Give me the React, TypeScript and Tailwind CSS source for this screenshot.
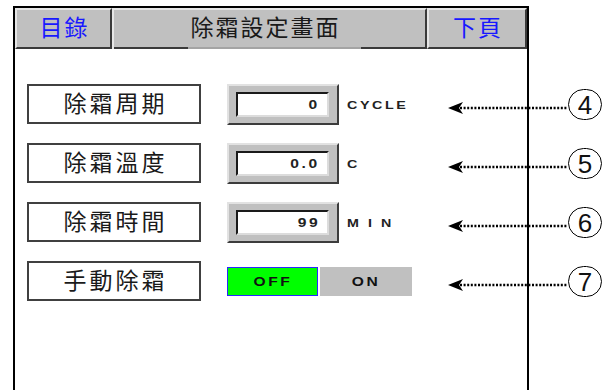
const cjk = "font-['Liberation_Sans','Noto_Sans_CJK_TC',sans-serif]"

type Row = { label: string; value?: string; unit?: string; unitCls?: string; mark: string; toggle?: boolean }

const rows: Row[] = [
  { label: "除霜周期", value: "0", unit: "CYCLE", unitCls: "tracking-[2px]", mark: "4" },
  { label: "除霜溫度", value: "0.0", unit: "C", unitCls: "tracking-[2px]", mark: "5" },
  { label: "除霜時間", value: "99", unit: "MIN", unitCls: "tracking-[7px]", mark: "6" },
  { label: "手動除霜", toggle: true, mark: "7" },
]

function Pointer({ mark }: { mark: string }) {
  return (
    <div className="flex items-start shrink-0">
      <svg width="120" height="14" viewBox="0 0 120 14" className="mt-[17px] shrink-0">
        <polygon points="0,7 15,1 11,7 15,13" fill="#000" />
        <line x1="12" y1="7" x2="119" y2="7" stroke="#000" strokeWidth="2.5" strokeDasharray="2 1.6" />
      </svg>
      <div className="shrink-0 mt-[5px] w-[34px] h-[31px] rounded-full border-[1.5px] border-black flex items-center justify-center text-[26px] leading-none font-['Liberation_Sans',sans-serif] text-[#111]">
        {mark}
      </div>
    </div>
  )
}

function NumField({ value }: { value: string }) {
  return (
    <div className="shrink-0 w-[112px] h-[41px] bg-[#c0c0c0] border-2 border-t-[#e2e2e2] border-l-[#e2e2e2] border-r-[#3c3c3c] border-b-[#3c3c3c] pt-[6px] pl-[7px]">
      <div className="w-[93px] h-[25px] bg-white border-2 border-t-[#1a1a1a] border-l-[#1a1a1a] border-r-[#dcdcdc] border-b-[#dcdcdc] flex items-center justify-end pr-[9px]">
        <span className="inline-block origin-right scale-x-[1.3] text-[12px] font-bold tracking-[2px] mr-[-2px] leading-none font-['Liberation_Sans',sans-serif] text-[#222]">{value}</span>
      </div>
    </div>
  )
}

function Toggle() {
  return (
    <div className="mt-[6px] flex gap-[2px] shrink-0">
      <div className="w-[91px] h-[29px] bg-[#00ff00] border-[1.5px] border-[#2828ff] flex items-center justify-center">
        <span className="inline-block scale-x-[1.3] text-[12px] font-bold tracking-[2px] font-['Liberation_Sans',sans-serif] text-[#111]">OFF</span>
      </div>
      <div className="w-[92px] h-[29px] bg-[#c0c0c0] flex items-center justify-center">
        <span className="inline-block scale-x-[1.3] text-[12px] font-bold tracking-[2px] font-['Liberation_Sans',sans-serif] text-[#111]">ON</span>
      </div>
    </div>
  )
}

export default function App() {
  return (
    <div className={`w-[614px] h-[390px] overflow-hidden bg-white pt-[6px] pl-[13px] ${cjk}`}>
      <div className="w-[516px] h-[400px] border-x-2 border-t-2 border-black">
        {/* header bar */}
        <div className="flex h-[41px]">
          <div className="w-[97px] bg-[#c0c0c0] border-2 border-t-[#e6e6e6] border-l-[#e6e6e6] border-r-[#3a3a3a] border-b-[#3a3a3a] flex items-center justify-center text-[23px] tracking-[2px] pl-[2px] text-[#1818ff]">
            目錄
          </div>
          <div className="w-[315px] bg-[#c0c0c0] border-t-2 border-l-2 border-r-2 border-t-[#e6e6e6] border-l-[#e6e6e6] border-r-[#3a3a3a] flex flex-col">
            <div className="flex-1 flex items-center justify-center text-[23px] tracking-[2px] pl-[2px] text-[#1a1a1a] -ml-[10px]">
              除霜設定畫面
            </div>
            <div className="flex h-[2px]">
              <div className="w-[74px] bg-[#3a3a3a]" />
              <div className="w-[173px] bg-[#a4a4a4]" />
              <div className="flex-1 bg-[#3a3a3a]" />
            </div>
          </div>
          <div className="flex-1 bg-[#c0c0c0] border-2 border-t-[#e6e6e6] border-l-[#e6e6e6] border-r-[#3a3a3a] border-b-[#3a3a3a] flex items-center justify-center text-[23px] tracking-[2px] pl-[2px] text-[#1818ff]">
            下頁
          </div>
        </div>

        {/* settings rows */}
        <div className="flex flex-col gap-[18px] pt-[35px] pl-[12px]">
          {rows.map((r) => (
            <div key={r.label} className="flex items-start h-[41px]">
              <div className="shrink-0 w-[174px] h-[40px] border-2 border-[#404040] flex items-center justify-center text-[23px] tracking-[3px] pl-[3px] text-[#1a1a1a]">
                {r.label}
              </div>
              <div className="shrink-0 ml-[26px] w-[221px] flex items-start">
                {r.toggle ? (
                  <Toggle />
                ) : (
                  <>
                    <NumField value={r.value!} />
                    <span className={`ml-[8px] mt-[16px] inline-block origin-left scale-x-[1.3] text-[11px] font-bold leading-none font-['Liberation_Sans',sans-serif] text-[#222] ${r.unitCls}`}>
                      {r.unit}
                    </span>
                  </>
                )}
              </div>
              <Pointer mark={r.mark} />
            </div>
          ))}
        </div>
      </div>
    </div>
  )
}
